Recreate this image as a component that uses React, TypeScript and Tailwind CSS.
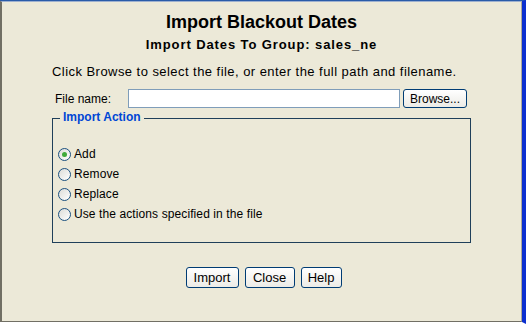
import React from "react";

function Radio({ checked, label }: { checked?: boolean; label: string }) {
  return (
    <div className="flex items-center h-[20px]">
      <span className="relative w-[13px] h-[13px] rounded-full border border-[#1C5180] bg-gradient-to-br from-[#DCDCD7] to-white mr-[3px]">
        {checked && (
          <span className="absolute left-[3px] top-[3px] w-[5px] h-[5px] rounded-full bg-[#3FAA3A]" />
        )}
      </span>
      <span className="tracking-[0.1px]">{label}</span>
    </div>
  );
}

function Btn({ children, w }: { children: React.ReactNode; w: string }) {
  return (
    <button
      className={`${w} h-[21px] rounded-[3px] border border-[#003C74] bg-gradient-to-b from-white to-[#ECEBE6] text-[13px] leading-none text-black`}
      style={{ fontFamily: '"Liberation Sans", Arial, sans-serif' }}
    >
      {children}
    </button>
  );
}

export default function App() {
  return (
    <div
      className="w-[526px] h-[324px] bg-[#ECE9D8] border-t border-t-[#2A5BA8] border-r-[4px] border-r-[#0B2FCF] border-b-[2px] border-b-white"
      style={{ fontFamily: '"Liberation Sans", Arial, sans-serif' }}
    >
      <div className="h-full border-t border-t-[#9DB0CF] border-l-[2px] border-l-[#716F64] border-r border-r-[#ACA899] border-b border-b-[#716F64] flex flex-col">
        <div className="text-center text-[18px] font-bold text-black leading-none mt-[11px]">
          Import Blackout Dates
        </div>
        <div className="text-center text-[13px] font-bold tracking-[0.9px] text-black leading-none mt-[7px]">
          Import Dates To Group: sales_ne
        </div>
        <div className="text-[13px] tracking-[0.45px] text-black leading-none mt-[14px] ml-[50px]">
          Click Browse to select the file, or enter the full path and filename.
        </div>
        <div className="flex items-center mt-[11px] text-[12px]">
          <span className="ml-[53px] w-[73px]">File name:</span>
          <input className="w-[272px] h-[19px] bg-white border border-[#7F9DB9] outline-none" />
          <button className="ml-[3px] w-[64px] h-[19px] rounded-[3px] border border-[#003C74] bg-gradient-to-b from-white to-[#ECEBE6] text-[12px] leading-none">
            Browse...
          </button>
        </div>
        <div className="relative ml-[50px] mt-[10px] w-[419px] h-[125px] border border-[#1F3F5A]">
          <span className="absolute -top-[8px] left-[7px] px-[3px] bg-[#ECE9D8] text-[12px] font-bold text-[#0046D5] leading-none">
            Import Action
          </span>
          <div className="pt-[25px] pl-[5px] text-[12px] text-black">
            <Radio checked label="Add" />
            <Radio label="Remove" />
            <Radio label="Replace" />
            <Radio label="Use the actions specified in the file" />
          </div>
        </div>
        <div className="flex justify-center gap-[6px] mt-[24px] pl-[4px]">
          <Btn w="w-[53px]">Import</Btn>
          <Btn w="w-[50px]">Close</Btn>
          <Btn w="w-[41px]">Help</Btn>
        </div>
      </div>
    </div>
  );
}
